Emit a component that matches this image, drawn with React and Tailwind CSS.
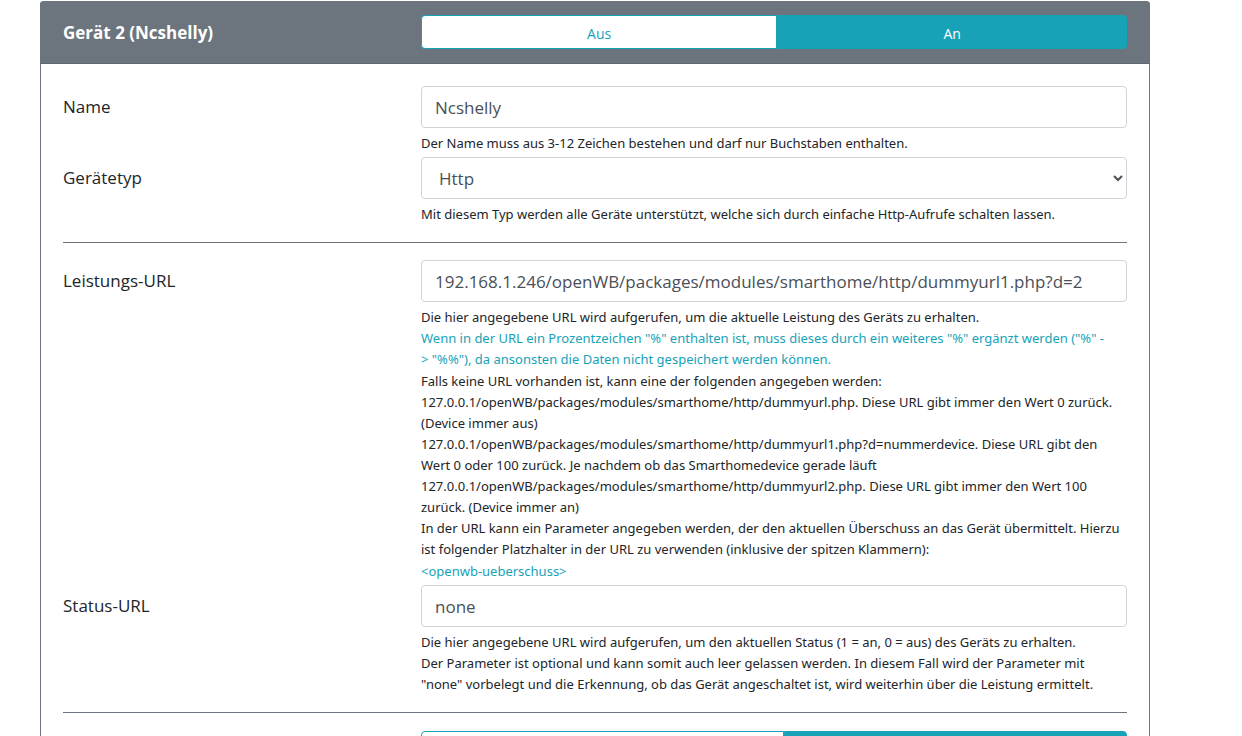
import React from "react";

const inputClass =
	"block w-full h-[42px] px-[13px] rounded border border-[#ced4da] bg-white text-[17px] text-[#495057]";

const Toggle = ({ label, options, value, onChange }) => (
	<div role="group" aria-label={label} className="flex w-full">
		{options.map((option) => (
			<button
				key={option}
				type="button"
				aria-pressed={value === option}
				onClick={() => onChange(option)}
				className={`flex-auto h-[34px] px-2 pt-[3px] border border-[#17a2b8] text-[14px] leading-5 cursor-pointer first:rounded-l last:rounded-r ${
					value === option ? "bg-[#17a2b8] text-white" : "bg-white text-[#17a2b8]"
				}`}>
				{option}
			</button>
		))}
	</div>
);

const Field = ({ id, label, help, children }) => (
	<div className="grid grid-cols-3 gap-x-[10px]">
		<label htmlFor={id} className="pt-2 text-[17px] leading-[26px]">
			{label}
		</label>
		<div className="col-span-2">
			{children}
			<div className="mt-[5px] text-[13px] leading-[21px] font-['Noto_Sans',sans-serif]">{help}</div>
		</div>
	</div>
);

const App = () => {
	const [enabled, setEnabled] = React.useState("An");
	const [extra, setExtra] = React.useState("Ja");
	const [name, setName] = React.useState("Ncshelly");
	const [powerUrl, setPowerUrl] = React.useState(
		"192.168.1.246/openWB/packages/modules/smarthome/http/dummyurl1.php?d=2"
	);
	const [statusUrl, setStatusUrl] = React.useState("none");

	return (
		<main className="pt-px pl-10 pr-[92px] bg-white text-[#212529] font-['Open_Sans','Noto_Sans',sans-serif]">
			<form className="rounded border-x border-b border-[#6c757d]">
				{/* Card header */}
				<div className="grid grid-cols-3 gap-x-[10px] items-center -mx-px px-[23px] py-[14px] rounded-t bg-[#6c757d] border-b border-[#5f676f]">
					<h2 className="pt-0.5 text-[17px] leading-6 font-bold text-white">Gerät 2 ({name})</h2>
					<div className="col-span-2">
						<Toggle
							label="Gerät 2"
							options={["Aus", "An"]}
							value={enabled}
							onChange={setEnabled}
						/>
					</div>
				</div>

				{/* Card body */}
				<div className="px-[22px] py-[22px]">
					<div className="flex flex-col gap-[3px]">
						<Field
							id="name"
							label="Name"
							help="Der Name muss aus 3-12 Zeichen bestehen und darf nur Buchstaben enthalten.">
							<input
								id="name"
								type="text"
								className={inputClass}
								value={name}
								onChange={(e) => setName(e.target.value)}
							/>
						</Field>
						<Field
							id="type"
							label="Gerätetyp"
							help="Mit diesem Typ werden alle Geräte unterstützt, welche sich durch einfache Http-Aufrufe schalten lassen.">
							<select
								id="type"
								className="block w-full h-[42px] pl-[13px] pr-px rounded border border-[#ced4da] bg-white text-[17px] text-[#495057]">
								<option>Http</option>
							</select>
						</Field>
					</div>

					<hr className="my-[17px] border-t border-[#6c757d]" />

					<div className="flex flex-col gap-[3px]">
						<Field
							id="power-url"
							label="Leistungs-URL"
							help={
								<>
									<p>
										Die hier angegebene URL wird aufgerufen, um die aktuelle Leistung des Geräts zu
										erhalten.
									</p>
									<p className="mb-px text-[#17a2b8]">
										Wenn in der URL ein Prozentzeichen "%" enthalten ist, muss dieses durch ein
										weiteres "%" ergänzt werden ("%" -<br />
										&gt; "%%"), da ansonsten die Daten nicht gespeichert werden können.
									</p>
									<p>
										Falls keine URL vorhanden ist, kann eine der folgenden angegeben werden:
										<br />
										127.0.0.1/openWB/packages/modules/smarthome/http/dummyurl.php. Diese URL gibt
										immer den Wert 0 zurück.
										<br />
										(Device immer aus)
										<br />
										127.0.0.1/openWB/packages/modules/smarthome/http/dummyurl1.php?d=nummerdevice.
										Diese URL gibt den
										<br />
										Wert 0 oder 100 zurück. Je nachdem ob das Smarthomedevice gerade läuft
										<br />
										127.0.0.1/openWB/packages/modules/smarthome/http/dummyurl2.php. Diese URL gibt
										immer den Wert 100
										<br />
										zurück. (Device immer an)
										<br />
										In der URL kann ein Parameter angegeben werden, der den aktuellen Überschuss an
										das Gerät übermittelt. Hierzu
										<br />
										ist folgender Platzhalter in der URL zu verwenden (inklusive der spitzen
										Klammern):
									</p>
									<p className="mt-px text-[#17a2b8]">&lt;openwb-ueberschuss&gt;</p>
								</>
							}>
							<input
								id="power-url"
								type="text"
								className={inputClass}
								value={powerUrl}
								onChange={(e) => setPowerUrl(e.target.value)}
							/>
						</Field>
						<Field
							id="status-url"
							label="Status-URL"
							help={
								<p>
									Die hier angegebene URL wird aufgerufen, um den aktuellen Status (1 = an, 0 = aus)
									des Geräts zu erhalten.
									<br />
									Der Parameter ist optional und kann somit auch leer gelassen werden. In diesem Fall
									wird der Parameter mit
									<br />
									"none" vorbelegt und die Erkennung, ob das Gerät angeschaltet ist, wird weiterhin
									über die Leistung ermittelt.
								</p>
							}>
							<input
								id="status-url"
								type="text"
								className={inputClass}
								value={statusUrl}
								onChange={(e) => setStatusUrl(e.target.value)}
							/>
						</Field>
					</div>

					<hr className="mt-[17px] mb-[18px] border-t border-[#6c757d]" />

					<div className="grid grid-cols-3 gap-x-[10px]">
						<div className="col-span-2 col-start-2">
							<Toggle
								label="Option"
								options={["Nein", "Ja"]}
								value={extra}
								onChange={setExtra}
							/>
						</div>
					</div>
				</div>
			</form>
		</main>
	);
};

export default App;
